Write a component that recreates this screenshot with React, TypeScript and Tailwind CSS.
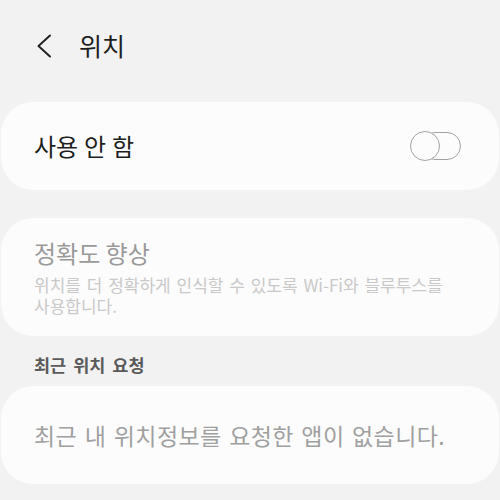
const font = { fontFamily: '"Noto Sans CJK KR", "Noto Sans", sans-serif' }

function Toggle() {
  return (
    <div className="relative h-[30px] w-[51px]">
      <div className="absolute right-0 top-[1px] h-[28px] w-[40px] rounded-full border-[1.5px] border-[#a3a3a3]" />
      <div className="absolute left-0 top-0 h-[30px] w-[30px] rounded-full border-[1.5px] border-[#a3a3a3] bg-[#fcfcfc]" />
    </div>
  )
}

export default function App() {
  return (
    <div className="h-[500px] w-[500px] overflow-hidden bg-[#f2f2f2] text-[#1e1e1e]" style={font}>
      <header className="flex h-[95px] items-center pb-[4px] pl-[36px]">
        <svg width="16" height="24" viewBox="0 0 16 24" fill="none" className="text-[#222]">
          <path d="M14 1.5 L2.5 12 L14 22.5" stroke="currentColor" strokeWidth="2" strokeLinecap="round" strokeLinejoin="round" />
        </svg>
        <h1 className="ml-[27px] text-[25px] leading-none">위치</h1>
      </header>

      <section className="mx-[1px] mt-[7px] flex h-[88px] items-center justify-between rounded-[32px] bg-[#fcfcfc] pl-[33px] pr-[38px]">
        <span className="text-[24px] leading-none [word-spacing:0.5px]">사용 안 함</span>
        <Toggle />
      </section>

      <section className="mx-[1px] mt-[28px] h-[118px] rounded-[32px] bg-[#fcfcfc] pl-[33px] pt-[20px]">
        <div className="text-[24px] leading-[30px] text-[#9a9a9a]">정확도 향상</div>
        <p className="mt-[6px] w-[435px] break-keep text-[17px] leading-[21px] text-[#c9c9c9] [word-spacing:2px]">
          위치를 더 정확하게 인식할 수 있도록 Wi-Fi와 블루투스를 사용합니다.
        </p>
      </section>

      <h2 className="mt-[18px] pl-[34px] text-[17.5px] font-bold leading-[22px] text-[#5a5a5a] [word-spacing:3px]">최근 위치 요청</h2>

      <section className="mx-[1px] mt-[10px] flex h-[98px] items-center rounded-[32px] bg-[#fcfcfc] pl-[33px]">
        <span className="text-[23px] leading-none tracking-[0.4px] text-[#a0a0a0] [word-spacing:2px]">최근 내 위치정보를 요청한 앱이 없습니다.</span>
      </section>
    </div>
  )
}
